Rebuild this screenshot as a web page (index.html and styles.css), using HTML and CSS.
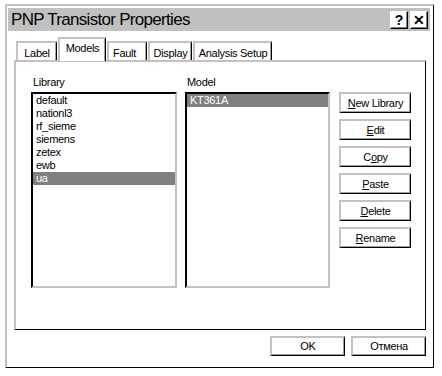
FILE: index.html
```html
<!DOCTYPE html>
<html>
<head>
<meta charset="utf-8">
<link rel="stylesheet" href="styles.css">
</head>
<body>
<div class="window">
  <div class="titlebar">
    <span class="title">PNP Transistor Properties</span>
    <div class="tbtns">
      <span class="tbtn">?</span>
      <span class="tbtn">✕</span>
    </div>
  </div>
  <div class="tabs">
    <span class="tab t-label">Label</span>
    <span class="tab sel t-models">Models</span>
    <span class="tab t-fault">Fault</span>
    <span class="tab t-display">Display</span>
    <span class="tab t-analysis">Analysis Setup</span>
  </div>
  <div class="panel">
    <div class="col">
      <div class="lbl">Library</div>
      <div class="list lib">
        <div class="item">default</div>
        <div class="item">nationl3</div>
        <div class="item">rf_sieme</div>
        <div class="item">siemens</div>
        <div class="item">zetex</div>
        <div class="item">ewb</div>
        <div class="item hl">ua</div>
      </div>
    </div>
    <div class="col">
      <div class="lbl">Model</div>
      <div class="list model">
        <div class="item hl">KT361A</div>
      </div>
    </div>
    <div class="btns">
      <span class="btn"><u>N</u>ew Library</span>
      <span class="btn"><u>E</u>dit</span>
      <span class="btn">C<u>o</u>py</span>
      <span class="btn"><u>P</u>aste</span>
      <span class="btn"><u>D</u>elete</span>
      <span class="btn"><u>R</u>ename</span>
    </div>
  </div>
  <div class="footer">
    <span class="btn fbtn">OK</span>
    <span class="btn fbtn">Отмена</span>
  </div>
</div>
</body>
</html>
```

FILE: styles.css
```css
* { box-sizing: border-box; }
html, body { margin: 0; padding: 0; background: #fff; }
body {
  width: 442px;
  height: 376px;
  font-family: "Liberation Sans", Arial, sans-serif;
  font-size: 11px;
  letter-spacing: -0.3px;
  color: #000;
  overflow: hidden;
}
.window {
  margin: 4px 0 0 5px;
  width: 429px;
  height: 364px;
  border-left: 2px solid #c8c0c0;
  border-top: 2px solid #c8c0c0;
  border-right: 1px solid #000;
  border-bottom: 1px solid #000;
  padding: 2px 3px 0 1px;
  display: flex;
  flex-direction: column;
}
.titlebar {
  height: 23px;
  background: #c0c0c0;
  display: flex;
  align-items: center;
  justify-content: space-between;
  padding: 0 2px 0 3px;
}
.title {
  font-size: 17px;
  letter-spacing: -0.7px;
  line-height: 23px;
}
.tbtns { display: flex; gap: 2px; }
.tbtn {
  width: 18px;
  height: 18px;
  background: #fff;
  border-top: 1px solid #fff;
  border-left: 1px solid #fff;
  border-right: 1px solid #000;
  border-bottom: 1px solid #000;
  box-shadow: inset -1px -1px #808080;
  display: flex;
  align-items: center;
  justify-content: center;
  font-weight: bold;
  font-size: 14px;
  letter-spacing: 0;
  line-height: 1;
}
.tabs {
  margin: 6px 0 0 8px;
  display: flex;
  align-items: flex-end;
  height: 23px;
  position: relative;
  z-index: 1;
}
.tab {
  height: 19px;
  padding: 4px 0 0 0;
  text-align: center;
  border-top: 2px solid #c8c0c0;
  border-left: 2px solid #c8c0c0;
  border-right: 1px solid #000;
  box-shadow: inset -1px 0 #a0a0a0;
  line-height: 13px;
  margin-right: 1px;
}
.t-label { width: 41px; }
.t-models { width: 48px; }
.t-fault { width: 40px; text-align: left; padding-left: 4px; }
.t-display { width: 44px; }
.t-analysis { width: 79px; }
.tab.sel {
  height: 24px;
  padding-top: 3px;
  background: #fff;
  margin-bottom: -1px;
}
.panel {
  margin: 0 4px 0 6px;
  height: 270px;
  border-top: 2px solid #c8c0c0;
  border-left: 2px solid #c8c0c0;
  border-right: 1px solid #000;
  border-bottom: 1px solid #000;
  padding: 13px 0 0 15px;
  display: flex;
  gap: 8px;
}
.col { display: flex; flex-direction: column; }
.lbl { height: 17px; line-height: 13px; padding-left: 2px; padding-top: 1px; }
.list {
  height: 196px;
  border-top: 2px solid #000;
  border-left: 2px solid #000;
  border-right: 2px solid #c8c0c0;
  border-bottom: 2px solid #c8c0c0;
}
.lib { width: 146px; }
.model { width: 145px; }
.item { height: 13px; line-height: 13px; padding-left: 3px; }
.item.hl { background: #808080; color: #fff; }
.btns {
  margin-left: 1px;
  padding-top: 17px;
  display: flex;
  flex-direction: column;
  gap: 6px;
}
.btn {
  width: 72px;
  height: 21px;
  border-top: 2px solid #c8c0c0;
  border-left: 2px solid #c8c0c0;
  border-right: 1px solid #000;
  border-bottom: 1px solid #000;
  box-shadow: inset -1px -1px #a0a0a0;
  display: flex;
  align-items: center;
  justify-content: center;
  line-height: 13px;
}
.footer {
  display: flex;
  justify-content: flex-end;
  gap: 6px;
  margin: 6px 4px 0 0;
}
.fbtn { width: 75px; height: 20px; }
```
